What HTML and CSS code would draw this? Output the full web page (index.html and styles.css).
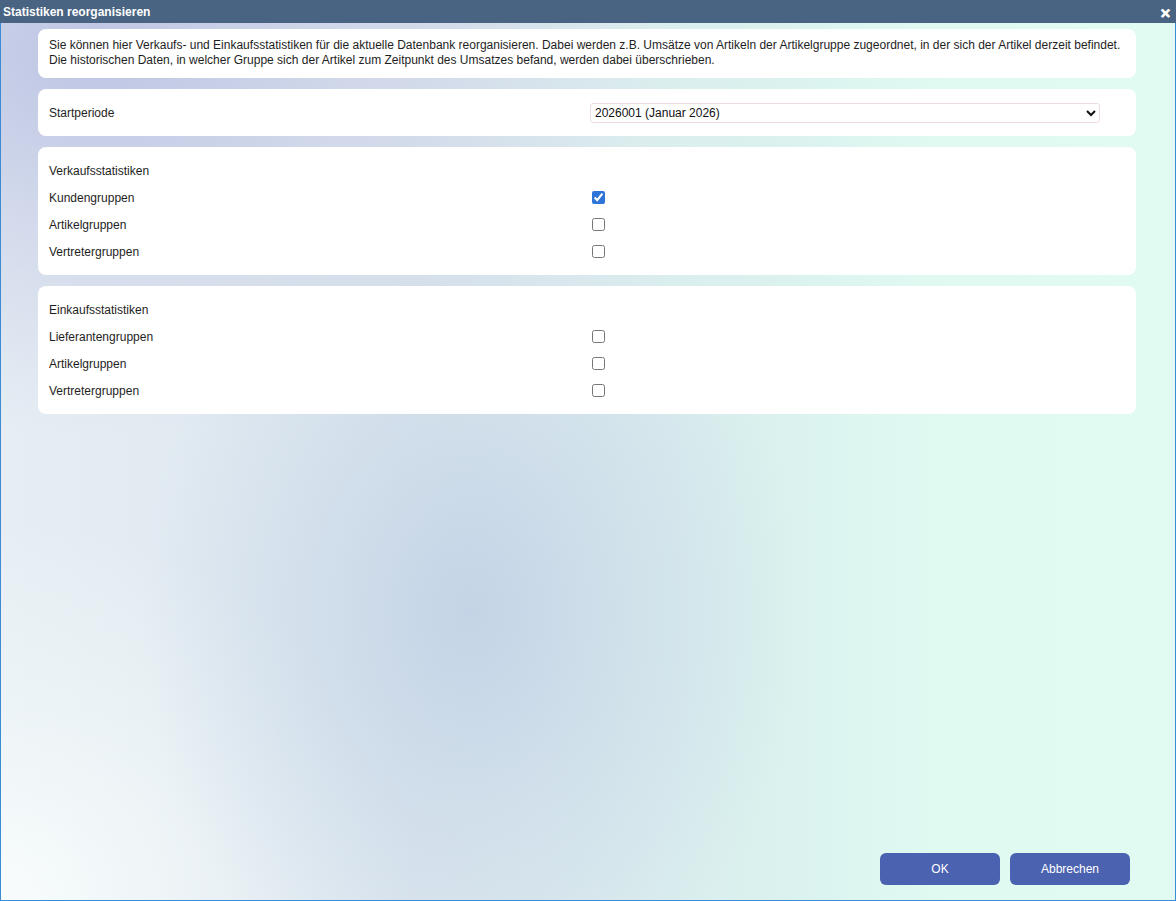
FILE: index.html
```html
<!DOCTYPE html>
<html lang="de">
<head>
  <meta charset="UTF-8" />
  <title>Statistiken reorganisieren</title>
  <link rel="stylesheet" href="styles.css">
</head>
<body>
  <div class="window">
    <!-- Title bar -->
    <div class="titlebar">
      <span class="title">Statistiken reorganisieren</span>
      <span class="close-btn">&#x2715;</span>
    </div>

    <div class="content">
      <div class="card info">
        Sie können hier Verkaufs- und Einkaufsstatistiken für die aktuelle Datenbank reorganisieren. Dabei werden z.B. Umsätze von Artikeln der Artikelgruppe zugeordnet, in der sich der Artikel derzeit befindet.<br>
        Die historischen Daten, in welcher Gruppe sich der Artikel zum Zeitpunkt des Umsatzes befand, werden dabei überschrieben.
      </div>

      <div class="card period">
        <label for="startPeriod">Startperiode</label>
        <select id="startPeriod">
          <option>2026001 (Januar 2026)</option>
        </select>
      </div>

      <div class="card group">
        <div class="row"><span class="head">Verkaufsstatistiken</span></div>
        <div class="row"><label>Kundengruppen</label><input type="checkbox" checked></div>
        <div class="row"><label>Artikelgruppen</label><input type="checkbox"></div>
        <div class="row"><label>Vertretergruppen</label><input type="checkbox"></div>
      </div>

      <div class="card group">
        <div class="row"><span class="head">Einkaufsstatistiken</span></div>
        <div class="row"><label>Lieferantengruppen</label><input type="checkbox"></div>
        <div class="row"><label>Artikelgruppen</label><input type="checkbox"></div>
        <div class="row"><label>Vertretergruppen</label><input type="checkbox"></div>
      </div>
    </div>

    <div class="footer">
      <button class="btn">OK</button>
      <button class="btn">Abbrechen</button>
    </div>
  </div>
</body>
</html>
```

FILE: styles.css
```css
* { margin: 0; padding: 0; box-sizing: border-box; }
html, body { height: 100%; }
body {
  font-family: "Liberation Sans", Arial, sans-serif;
  font-size: 12px;
  color: #1e1e1e;
  overflow: hidden;
}
.window {
  height: 100vh;
  display: flex;
  flex-direction: column;
  border: 1px solid #3b8bd5;
  border-top: none;
  background:
    radial-gradient(ellipse 330px 420px at 40% 68%, rgba(196,212,230,1) 0%, rgba(200,216,232,0.6) 45%, rgba(210,224,236,0) 100%),
    radial-gradient(ellipse 560px 380px at 8% 6%, rgba(190,197,228,1) 0%, rgba(198,205,230,0.6) 45%, rgba(205,212,232,0) 100%),
    radial-gradient(ellipse 420px 380px at 0% 100%, rgba(248,252,252,1) 0%, rgba(244,250,250,0.5) 50%, rgba(244,250,250,0) 100%),
    linear-gradient(to right, #e6eef4 0%, #dde6ee 35%, #daf1ee 65%, #e0faf2 80%, #e1fbf3 100%);
}
/* Title bar */
.titlebar {
  height: 23px;
  background: #486482;
  color: #fff;
  display: flex;
  align-items: center;
  justify-content: space-between;
  padding: 0 5px 0 3px;
  margin: 0 -1px;
}
.titlebar .title {
  font-weight: bold;
  font-size: 12px;
}
.titlebar .close-btn {
  font-weight: bold;
  font-size: 13px;
  margin-top: 3px;
  -webkit-text-stroke: 0.6px #fff;
}
/* Content cards */
.content {
  flex: 1;
  padding: 6px 39px 0 37px;
  display: flex;
  flex-direction: column;
  gap: 11px;
}
.card {
  background: #fff;
  border-radius: 8px;
  padding: 10px 11px;
}
.card.info {
  line-height: 15px;
  padding: 9px 11px 10px;
}
.card.period {
  display: flex;
  align-items: center;
  height: 47px;
}
.card.period label {
  width: 541px;
}
.card.period select {
  width: 510px;
  height: 20px;
  font-family: "Liberation Sans", Arial, sans-serif;
  font-size: 12px;
  color: #111;
  border: 1px solid #f0dcdc;
  border-radius: 3px;
  background: #fff;
  padding: 0;
}
.card.group {
  padding: 10px 11px 10px;
  height: 128px;
}
.card.group .row {
  display: flex;
  align-items: center;
  height: 27px;
}
.card.group .row label {
  width: 543px;
}
.card.group input[type="checkbox"] {
  width: 13px;
  height: 13px;
  margin: 0;
  accent-color: #2f74d8;
}
/* Footer buttons */
.footer {
  display: flex;
  justify-content: flex-end;
  gap: 10px;
  padding: 0 45px 15px 0;
}
.btn {
  width: 120px;
  height: 32px;
  background: #4a62b0;
  color: #fff;
  border: none;
  border-radius: 6px;
  font-family: "Liberation Sans", Arial, sans-serif;
  font-size: 12px;
  cursor: pointer;
}
```
